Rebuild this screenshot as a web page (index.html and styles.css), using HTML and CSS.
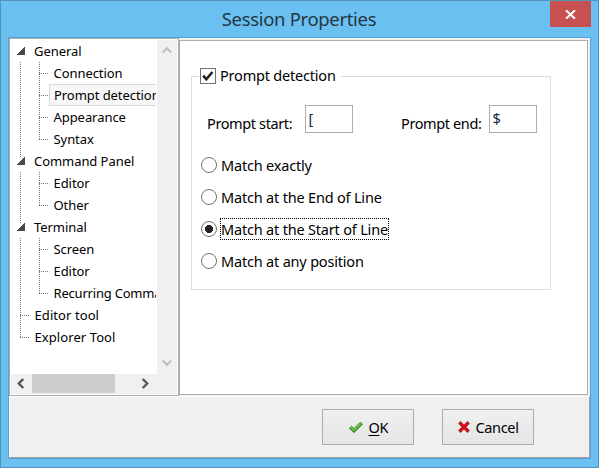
FILE: index.html
```html
<!DOCTYPE html>
<html lang="en">
<head>
<meta charset="utf-8">
<title>Session Properties</title>
<link rel="stylesheet" href="styles.css">
</head>
<body>
<div class="window">
  <header class="titlebar">
    <h1>Session Properties</h1>
    <button class="close" aria-label="Close"><svg width="11" height="9" viewBox="0 0 11 9"><path d="M1 0.3 10 8.7M10 0.3 1 8.7" stroke="#fff" stroke-width="2.1"/></svg></button>
  </header>
  <main class="client">
    <div class="content">
      <nav class="tree">
        <div class="view">
          <div class="row"><i class="arrow"></i><span class="label">General</span></div>
          <div class="row"><i class="g v"></i><i class="g t"></i><span class="label">Connection</span></div>
          <div class="row"><i class="g v"></i><i class="g t"></i><span class="label selected">Prompt detection</span></div>
          <div class="row"><i class="g v"></i><i class="g t"></i><span class="label">Appearance</span></div>
          <div class="row"><i class="g v"></i><i class="g l"></i><span class="label">Syntax</span></div>
          <div class="row"><i class="arrow on"></i><span class="label">Command Panel</span></div>
          <div class="row"><i class="g v"></i><i class="g t"></i><span class="label">Editor</span></div>
          <div class="row"><i class="g v"></i><i class="g l"></i><span class="label">Other</span></div>
          <div class="row"><i class="arrow on"></i><span class="label">Terminal</span></div>
          <div class="row"><i class="g v"></i><i class="g t"></i><span class="label">Screen</span></div>
          <div class="row"><i class="g v"></i><i class="g t"></i><span class="label">Editor</span></div>
          <div class="row"><i class="g v"></i><i class="g l"></i><span class="label tight">Recurring Commands</span></div>
          <div class="row"><i class="g t"></i><span class="label loose">Editor tool</span></div>
          <div class="row"><i class="g l"></i><span class="label loose">Explorer Tool</span></div>
        </div>
        <div class="vscroll">
          <svg width="10" height="8" viewBox="0 0 10 8"><path d="M.7 6.5 5 2.2 9.3 6.5" fill="none" stroke="#bfbfbf" stroke-width="2.2"/></svg>
          <svg width="10" height="8" viewBox="0 0 10 8"><path d="M.7 1.5 5 5.8 9.3 1.5" fill="none" stroke="#bfbfbf" stroke-width="2.2"/></svg>
        </div>
        <div class="hscroll">
          <svg width="21" height="19" viewBox="0 0 21 19"><path d="M12.3 5 7.8 9.5 12.3 14" fill="none" stroke="#555" stroke-width="2.4"/></svg>
          <div class="thumb"></div>
          <svg width="21" height="19" viewBox="0 0 21 19"><path d="M7.7 5 12.2 9.5 7.7 14" fill="none" stroke="#555" stroke-width="2.4"/></svg>
        </div>
      </nav>
      <section class="page">
        <div class="group">
          <label class="caption"><span class="check"><svg width="14" height="14" viewBox="0 0 14 14"><path d="M2.2 6.7 5.3 10.3 11.4 3" fill="none" stroke="#222" stroke-width="2.6"/></svg></span><span class="cap-text">Prompt detection</span></label>
          <div class="fields">
            <span class="start-label">Prompt start:</span><span class="input">[</span>
            <span class="end-label">Prompt end:</span><span class="input">$</span>
          </div>
          <div class="radios">
            <label class="radio"><i></i><span>Match exactly</span></label>
            <label class="radio"><i></i><span>Match at the End of Line</span></label>
            <label class="radio on"><i></i><span>Match at the Start of Line</span></label>
            <label class="radio"><i></i><span>Match at any position</span></label>
          </div>
        </div>
      </section>
    </div>
    <footer class="footer">
      <button class="btn"><svg width="14" height="12" viewBox="0 0 14 12"><path d="M1.3 6.2 5 9.6 12.7 2" fill="none" stroke="#3b8a2b" stroke-width="3.6"/><path d="M1.9 6.4 5 9.1 12.2 2.2" fill="none" stroke="#6cc644" stroke-width="1.8"/></svg><span class="ok"><u>O</u>K</span></button>
      <button class="btn cancel"><svg width="12" height="12" viewBox="0 0 12 12"><path d="M1.3 1.3 10.7 10.7M10.7 1.3 1.3 10.7" stroke="#a42a30" stroke-width="3.4"/><path d="M1.8 1.8 10.2 10.2M10.2 1.8 1.8 10.2" stroke="#e30b17" stroke-width="2"/></svg><span>Cancel</span></button>
    </footer>
  </main>
</div>
</body>
</html>
```
FILE: styles.css
```css
* { box-sizing: border-box; }
body { margin: 0; font: 14.5px/20px "Noto Sans", "Open Sans", sans-serif; color: #000; }
svg { display: block; flex: none; }
button { font: inherit; color: inherit; border-radius: 0; }
.window { width: 599px; height: 468px; background: #69c0f1; border: 1px solid #5295b8; padding: 0 7px 8px; display: flex; flex-direction: column; overflow: hidden; }
.titlebar { height: 36px; flex: none; display: flex; position: relative; justify-content: center; }
h1 { margin: 0 1px 0 0; font: 400 18.5px/36px "Noto Sans", sans-serif; letter-spacing: -.33px; color: #263742; white-space: nowrap; }
.close { position: absolute; right: 0; top: 0; width: 41px; height: 26px; border: 0; background: #c75050; padding: 0; display: flex; align-items: center; justify-content: center; }
.client { flex: 1; border: 1px solid #56a0d2; background: #f0f0f0; display: flex; flex-direction: column; min-height: 0; }
.content { height: 358px; flex: none; display: flex; }
.tree { width: 170px; border: 1px solid #abadb3; padding: 1px; background: #fff; display: grid; grid-template-columns: 145px 20px; grid-template-rows: 334px 20px; column-gap: 1px; }
.view { overflow: hidden; font-size: 13px; }
.row { height: 22px; display: flex; white-space: nowrap; }
.g { flex: none; width: 19px; height: 22px; --v: repeating-linear-gradient(to bottom, #777 0 1px, transparent 1px 2px); --h: repeating-linear-gradient(to right, #777 0 1px, transparent 1px 2px); background-repeat: no-repeat; }
.v { background-image: var(--v); background-size: 1px 22px; background-position: 9px 0; }
.t { background-image: var(--v), var(--h); background-size: 1px 22px, 9px 1px; background-position: 9px 0, 9px 11px; }
.l { background-image: var(--v), var(--h); background-size: 1px 12px, 9px 1px; background-position: 9px 0, 9px 11px; }
.arrow { flex: none; width: 19px; height: 22px; background: linear-gradient(135deg, transparent 47%, #484848 50%) 6px 7px / 8px 8px no-repeat; }
.arrow.on { background: linear-gradient(135deg, transparent 47%, #484848 50%) 6px 7px / 8px 8px no-repeat, repeating-linear-gradient(to bottom, #777 0 1px, transparent 1px 2px) 9px 0 / 1px 7px no-repeat; }
.label { padding-left: 4px; line-height: 22px; letter-spacing: -.06px; }
.label.tight { letter-spacing: -.2px; }
.label.loose { padding-left: 4.5px; letter-spacing: .08px; }
.g + .g + .label { padding-left: 4.5px; }
.g + .g + .label.selected { flex: 1; border: 1px solid #dadada; border-right: 0; background: #f7f7f7; padding-left: 4px; line-height: 20px; overflow: hidden; }
.vscroll { background: #f0f0f0; display: flex; flex-direction: column; justify-content: space-between; align-items: center; padding: 6px 0 7px; }
.hscroll { grid-column: 1 / 3; background: #f0f0f0; display: flex; height: 20px; padding-right: 21px; }
.thumb { width: 83px; height: 19px; background: #cdcdcd; }
.hscroll svg:last-child { margin-left: auto; }
.page { width: 409px; height: 355px; margin-top: 2px; border: 1px solid #abadb3; background: #fff; padding: 35px 0 0 11px; }
.group { width: 360px; height: 214px; border: 1px solid #dcdcdc; padding: 0 13px 0 9px; }
.caption { display: flex; align-items: center; width: 142px; height: 20px; margin: -11px 0 0 -2px; background: #fff; padding-left: 1px; }
.check { width: 16px; height: 16px; border: 1px solid #707070; flex: none; }
.cap-text { margin-left: 4px; padding-bottom: 2px; letter-spacing: -.2px; white-space: nowrap; }
.fields { display: flex; height: 29px; margin: 19px 0 0 6px; white-space: nowrap; }
.start-label, .end-label { padding-top: 8px; letter-spacing: -.38px; }
.start-label { width: 98px; }
.end-label { width: 88px; margin-left: 48px; }
.input { width: 48px; height: 28px; border: 1px solid #abadb3; padding-left: 2.5px; line-height: 24px; color: #10263a; }
.radios { margin-top: 15px; }
.radio { height: 32px; display: flex; align-items: center; }
.radio i { width: 16px; height: 16px; border: 1px solid #707070; border-radius: 50%; margin-right: 3px; }
.radio.on i { background: radial-gradient(circle at center, #222 0 3.8px, transparent 4.3px); }
.radio span { border: 1px solid transparent; height: 22px; line-height: 20px; letter-spacing: -.19px; white-space: nowrap; }
.radio.on span { border: 1px dotted #000; width: 169px; }
.footer { flex: 1; border: 1px solid #a0a0a0; border-top-color: #fff; border-left-color: #fff; display: flex; gap: 28px; padding: 12px 0 0 312px; }
.btn { width: 92px; height: 36px; border: 1px solid #acacac; background: linear-gradient(#f0f0f0, #e5e5e5); display: flex; align-items: center; padding: 0 0 0 26px; }
.btn span { margin-left: 5.5px; letter-spacing: -.35px; }
.btn.cancel { padding-left: 15px; }
.btn u { text-underline-offset: 2px; }
```
